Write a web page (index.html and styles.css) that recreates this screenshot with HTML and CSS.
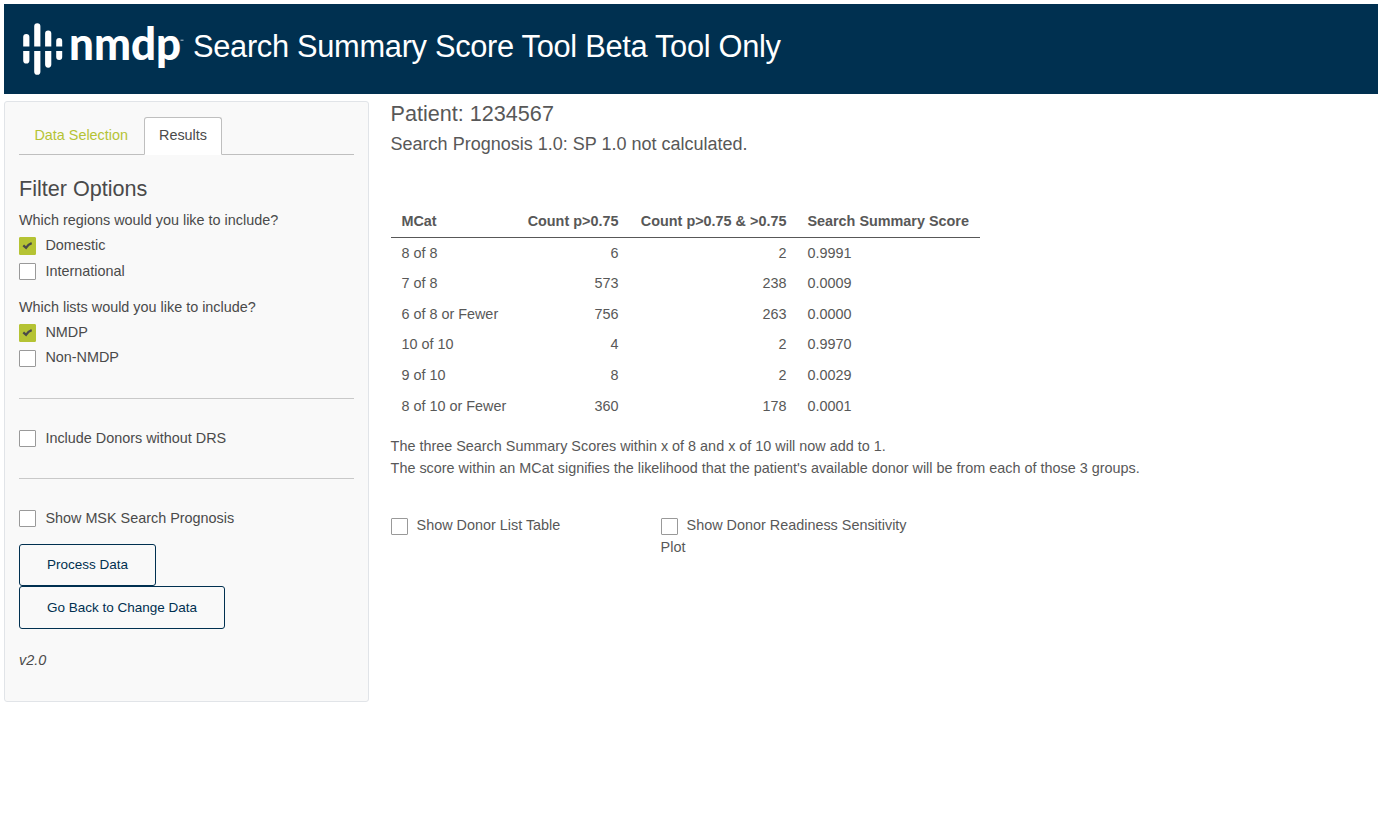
FILE: index.html
```html
<!DOCTYPE html>
<html lang="en">
<head>
<meta charset="utf-8">
<title>Search Summary Score Tool</title>
<link rel="stylesheet" href="styles.css">
</head>
<body>
<header class="banner">
  <svg class="logo" width="168" height="76" viewBox="20 10 168 76" role="img" aria-label="nmdp">
    <g fill="#fff">
      <path d="M23.2 46.500V37a3.100 3.100 0 0 1 6.200 0v9.500zM23.200 51h6.200v9.500a3.100 3.100 0 0 1-6.200 0z"/>
      <path d="M34.200 46.500V26.300a3.100 3.100 0 0 1 6.200 0v20.200zM34.200 51h6.200v20.700a3.100 3.100 0 0 1-6.200 0z"/>
      <path d="M45.100 46.500V33.600a3.100 3.100 0 0 1 6.200 0v12.900zM45.100 51h6.200v13.600a3.100 3.100 0 0 1-6.200 0z"/>
      <path d="M56.200 46.500V41a3 3 0 0 1 6 0v5.500zM56.200 51h6v6a3 3 0 0 1-6 0z"/>
    </g>
    <text class="logo-word" x="69" y="60.300" textLength="112" lengthAdjust="spacingAndGlyphs">nmdp</text>
    <path d="M180.500 40.200h3" stroke="#b5c3cf" stroke-width="1"/>
  </svg>
  <h1 class="title">Search Summary Score Tool Beta Tool Only</h1>
</header>
<div class="layout">
  <aside class="sidebar">
    <nav class="tabs">
      <a class="tab">Data Selection</a>
      <a class="tab tab-active">Results</a>
    </nav>
    <h2 class="filter-title">Filter Options</h2>
    <p class="question">Which regions would you like to include?</p>
    <label class="check"><span class="box box-on"><svg width="11" height="9" viewBox="0 0 11 9"><path d="M1.300 4.300L4 6.800Q6.200 3.400 9.700 2.200" fill="none" stroke="#4a4a4a" stroke-width="2.300"/></svg></span>Domestic</label>
    <label class="check"><span class="box"></span>International</label>
    <p class="question question-lists">Which lists would you like to include?</p>
    <label class="check"><span class="box box-on"><svg width="11" height="9" viewBox="0 0 11 9"><path d="M1.300 4.300L4 6.800Q6.200 3.400 9.700 2.200" fill="none" stroke="#4a4a4a" stroke-width="2.300"/></svg></span>NMDP</label>
    <label class="check check-last"><span class="box"></span>Non-NMDP</label>
    <hr class="rule rule-first">
    <label class="check check-section"><span class="box"></span>Include Donors without DRS</label>
    <hr class="rule">
    <label class="check check-section"><span class="box"></span>Show MSK Search Prognosis</label>
    <div class="actions">
      <button class="btn btn-process">Process Data</button>
      <button class="btn">Go Back to Change Data</button>
    </div>
    <p class="version">v2.0</p>
  </aside>
  <main class="content">
    <h2 class="patient">Patient: 1234567</h2>
    <h3 class="prognosis">Search Prognosis 1.0: SP 1.0 not calculated.</h3>
    <table class="scores">
      <colgroup><col class="col-cat"><col class="col-count"><col class="col-both"><col class="col-score"></colgroup>
      <thead><tr><th>MCat</th><th class="num">Count p&gt;0.75</th><th class="num">Count p&gt;0.75 &amp; &gt;0.75</th><th>Search Summary Score</th></tr></thead>
      <tbody>
        <tr><td>8 of 8</td><td class="num">6</td><td class="num">2</td><td>0.9991</td></tr>
        <tr><td>7 of 8</td><td class="num">573</td><td class="num">238</td><td>0.0009</td></tr>
        <tr><td>6 of 8 or Fewer</td><td class="num">756</td><td class="num">263</td><td>0.0000</td></tr>
        <tr><td>10 of 10</td><td class="num">4</td><td class="num">2</td><td>0.9970</td></tr>
        <tr><td>9 of 10</td><td class="num">8</td><td class="num">2</td><td>0.0029</td></tr>
        <tr><td>8 of 10 or Fewer</td><td class="num">360</td><td class="num">178</td><td>0.0001</td></tr>
      </tbody>
    </table>
    <p class="note">The three Search Summary Scores within x of 8 and x of 10 will now add to 1.<br>The score within an MCat signifies the likelihood that the patient's available donor will be from each of those 3 groups.</p>
    <div class="options">
      <label class="option"><span class="box"></span>Show Donor List Table</label>
      <label class="option"><span class="box"></span>Show Donor Readiness Sensitivity<br>Plot</label>
    </div>
  </main>
</div>
</body>
</html>
```
FILE: styles.css
```css
* { box-sizing: border-box; }
body {
  margin: 0;
  padding: 4px 0 0 4px;
  background: #fff;
  color: #585858;
  font: 14.4px/21.6px "Liberation Sans", Arial, sans-serif;
}
h1, h2, h3, p { margin: 0; font-weight: 400; }
.banner {
  display: flex;
  align-items: flex-start;
  height: 90px;
  padding: 6px 0 0 16px;
  background: #003050;
  color: #fff;
}
.logo { display: block; flex: none; }
.logo-word { font: 900 46px Lato, sans-serif; fill: #fff; }
.title { margin-left: 5px; padding-top: 18px; font-size: 30.8px; letter-spacing: -0.3px; line-height: 37px; white-space: nowrap; }
.layout { display: flex; align-items: flex-start; padding-top: 7px; }
.sidebar {
  width: 365px;
  height: 601px;
  padding: 15px 14px 0;
  border: 1px solid #e1e4e8;
  border-radius: 3px;
  background: #f9f9f9;
  color: #4a4a4a;
}
.tabs { display: flex; height: 38px; border-bottom: 1px solid #bfbfbf; }
.tab { height: 38px; padding: 7px 15px 7px 14.4px; border: 1px solid transparent; color: #b5c334; white-space: nowrap; }
.tab-active {
  width: 78px;
  padding: 7px 14px;
  border-color: #bfbfbf;
  border-bottom-color: #fff;
  border-radius: 3px 3px 0 0;
  background: #fff;
  color: #4a4a4a;
}
.filter-title { margin-top: 20px; font-size: 21.6px; line-height: 27px; }
.question { margin-top: 8px; }
.question-lists { margin-top: 14.800px; }
.check { display: flex; gap: 9.4px; margin-top: 4px; white-space: nowrap; }
.box {
  display: inline-block;
  flex: none;
  width: 17px;
  height: 17px;
  margin-top: 2px;
  border: 1px solid #999;
  border-radius: 1px;
  background: #fff;
}
.question + .check { margin-top: 3.400px; }
.check-last { margin-top: 3.400px; }
.check-last .box { margin-top: 2.600px; }
.box-on { display: flex; align-items: center; justify-content: center; height: 18px; border-color: #b5c334; background: #b5c334; }
.rule { margin: 28.400px 0 0; border: 0; border-top: 1px solid #c9c9c9; }
.rule-first { margin-top: 29.200px; }
.check-section { margin-top: 29px; }
.actions { display: flex; flex-direction: column; align-items: flex-start; margin-top: 14.800px; }
.btn {
  width: 206px;
  height: 43px;
  padding: 0;
  border: 1px solid #003050;
  border-radius: 3px;
  background: transparent;
  color: #003050;
  font: 13.5px "Liberation Sans", Arial, sans-serif;
}
.btn-process { width: 137px; height: 42px; padding-bottom: 1px; }
.version { margin-top: 20.600px; font-style: italic; }
.content { margin-left: 21.600px; }
.patient { font-size: 21.6px; line-height: 26px; }
.prognosis { margin-top: 6px; font-size: 18px; line-height: 22px; }
.scores { width: 589px; margin-top: 50px; table-layout: fixed; border-collapse: collapse; }
.scores th, .scores td { height: 30.600px; padding: 0 10.200px 0 10.800px; text-align: left; white-space: nowrap; }
.scores th { height: 32px; padding-top: 3px; border-bottom: 1px solid #585858; }
.scores tbody tr:first-child td { height: 31.600px; padding-top: 1px; }
.scores tbody tr:last-child td { height: 31.400px; padding-top: 0.800px; }
.scores .num { text-align: right; }
.col-cat { width: 126px; }
.col-count { width: 112px; }
.col-both { width: 168px; }
.col-score { width: 183px; }
.note { margin-top: 13.600px; white-space: nowrap; }
.options { display: flex; margin-top: 34.600px; }
.option { width: 270px; line-height: 22px; white-space: nowrap; }
.option .box { margin: 0 9px 0 0; vertical-align: -5px; }
```
